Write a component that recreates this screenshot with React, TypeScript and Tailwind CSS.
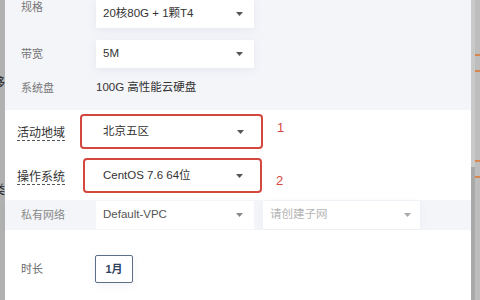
import React from "react";

const font = { fontFamily: '"Liberation Sans", Arial, "Noto Sans CJK SC", sans-serif' };

function Caret({ color = "#555" }: { color?: string }) {
  return (
    <svg width="7" height="4" viewBox="0 0 7 4" className="shrink-0">
      <path d="M0 0 L7 0 L3.5 4 Z" fill={color} />
    </svg>
  );
}

export default function App() {
  return (
    <div className="w-[480px] h-[300px] overflow-hidden flex bg-white" style={font}>
      {/* left strip */}
      <div className="w-[5px] h-full bg-[#b1b1b1] overflow-hidden flex flex-col shrink-0">
        <div className="h-[76px]" />
        <div className="w-[5px] flex justify-end text-[12px] leading-[14px] text-[#222] whitespace-nowrap">移</div>
        <div className="h-[93px]" />
        <div className="w-[5px] flex justify-end text-[12px] leading-[14px] text-[#222] whitespace-nowrap">类</div>
      </div>

      {/* main panel */}
      <div className="flex-1 h-full flex flex-col">
        {/* section A */}
        <div className="h-[110px] bg-[#f4f5f9] pl-[16px] flex flex-col shrink-0">
          <div className="flex items-start h-[28px]">
            <div className="w-[75px] text-[11px] leading-[14px] text-[#777]">规格</div>
            <div className="w-[158px] h-[28px] bg-white shadow-[0_2px_10px_rgba(60,80,140,0.08)] pl-[7px] pr-[11px] flex items-center justify-between">
              <span className="text-[11.5px] text-[#333]">20核80G + 1颗T4</span>
              <Caret />
            </div>
          </div>
          <div className="flex items-center h-[28px] mt-[12px]">
            <div className="w-[75px] text-[11px] text-[#777]">带宽</div>
            <div className="w-[158px] h-[28px] bg-white shadow-[0_2px_10px_rgba(60,80,140,0.08)] pl-[7px] pr-[11px] flex items-center justify-between">
              <span className="text-[11.5px] text-[#333]">5M</span>
              <Caret />
            </div>
          </div>
          <div className="flex items-center h-[14px] mt-[13px]">
            <div className="w-[75px] text-[11px] text-[#777]">系统盘</div>
            <div className="text-[11.5px] text-[#333]">100G 高性能云硬盘</div>
          </div>
        </div>

        {/* section B */}
        <div className="h-[90px] bg-white pt-[4px] pl-[12px] flex flex-col shrink-0">
          <div className="flex items-center h-[35px]">
            <div className="w-[63px]">
              <span className="text-[12px] leading-[16px] text-[#333] border-b border-dashed border-[#555]">活动地域</span>
            </div>
            <div className="w-[183px] h-[35px] border-2 border-[#d4473f] rounded-[4px] bg-white pl-[21px] pr-[17px] flex items-center justify-between">
              <span className="text-[11.5px] text-[#333]">北京五区</span>
              <Caret />
            </div>
            <div className="self-start mt-[6px] ml-[14px] text-[13px] leading-[16px] text-[#d4473f]">1</div>
          </div>
          <div className="flex items-center h-[35px] mt-[9px]">
            <div className="w-[66px]">
              <span className="text-[12px] leading-[16px] text-[#333] border-b border-dashed border-[#555]">操作系统</span>
            </div>
            <div className="w-[179px] h-[35px] border-2 border-[#d4473f] rounded-[4px] bg-white pl-[18px] pr-[17px] flex items-center justify-between">
              <span className="text-[11.5px] text-[#333]">CentOS 7.6 64位</span>
              <Caret />
            </div>
            <div className="self-start mt-[15px] ml-[14px] text-[13px] leading-[16px] text-[#d4473f]">2</div>
          </div>
        </div>

        {/* section C */}
        <div className="h-[30px] bg-[#f4f5f9] pl-[16px] flex items-center shrink-0 shadow-[0_4px_6px_rgba(60,80,140,0.05)]">
          <div className="w-[75px] text-[11px] text-[#888]">私有网络</div>
          <div className="w-[158px] h-[28px] bg-white pl-[7px] pr-[11px] flex items-center justify-between">
            <span className="text-[11.5px] text-[#555]">Default-VPC</span>
            <Caret color="#888" />
          </div>
          <div className="w-[157px] h-[28px] ml-[9px] bg-white pl-[7px] pr-[9px] flex items-center justify-between shadow-[0_2px_8px_rgba(60,80,140,0.06)]">
            <span className="text-[11.5px] text-[#b5b5b5]">请创建子网</span>
            <Caret color="#aaa" />
          </div>
        </div>

        {/* section D */}
        <div className="flex-1 bg-white pl-[16px] pt-[25px]">
          <div className="flex items-center h-[28px]">
            <div className="w-[74px] text-[11px] text-[#666]">时长</div>
            <div className="w-[38px] h-[28px] border border-[#5d6f88] rounded-[2px] flex items-center justify-center text-[11px] font-bold text-[#2f4260] shadow-[0_2px_8px_rgba(60,80,140,0.08)]">
              1月
            </div>
          </div>
        </div>
      </div>

      {/* scrollbar */}
      <div className="w-[4px] h-full bg-[#a9a9a9] flex flex-col shrink-0">
        <div className="h-[167px] bg-[#c9c9c9]" />
      </div>
      {/* right strip */}
      <div className="w-[5px] h-full bg-[#bdbdbd] flex flex-col shrink-0">
        <div className="h-[54px]" />
        <div className="h-[2px] bg-[#d8884e]" />
        <div className="h-[14px]" />
        <div className="h-[2px] bg-[#d8884e]" />
        <div className="h-[88px]" />
        <div className="h-[2px] bg-[#d8884e]" />
        <div className="h-[14px]" />
        <div className="h-[2px] bg-[#d8884e]" />
      </div>
    </div>
  );
}
